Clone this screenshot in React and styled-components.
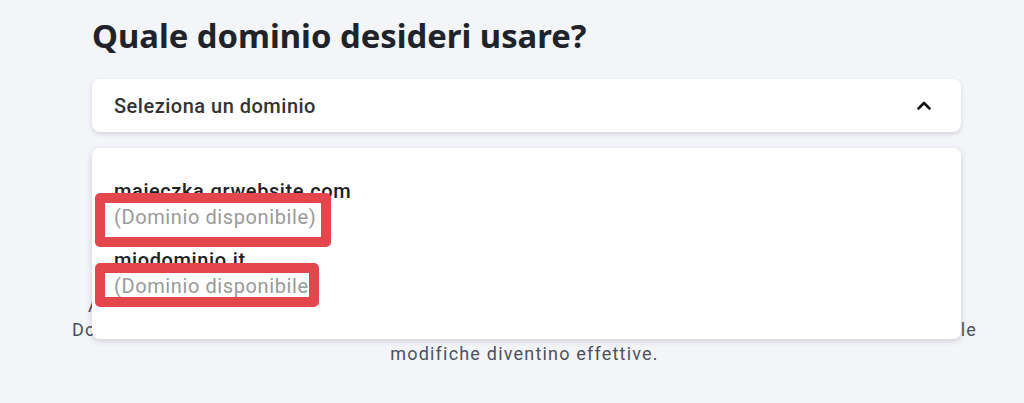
import React from 'react';
import styled, { createGlobalStyle } from 'styled-components';

const GlobalStyle = createGlobalStyle`
  body {
    margin: 0;
    background: #f4f5f9;
    font-family: Roboto, "Liberation Sans", sans-serif;
  }
`

const Page = styled.div`
  width: 869px;
  padding: 13px 0 0 92px;
`

const Title = styled.h1`
  margin: 0;
  font-family: "Noto Sans", "Open Sans", sans-serif;
  font-weight: 700;
  font-size: 32.8px;
  line-height: 45px;
  color: #20232a;
`

const SelectWrap = styled.div`
  position: relative;
  margin-top: 21px;
`

const SelectBox = styled.div`
  height: 53px;
  display: flex;
  align-items: center;
  justify-content: space-between;
  padding: 0 30px 0 22px;
  background: #fff;
  border-radius: 8px;
  box-shadow: 0 2px 4px rgba(30, 35, 50, 0.16);
  font-size: 20px;
  font-weight: 500;
  letter-spacing: 0.5px;
  color: #333;
`

const Menu = styled.div`
  position: absolute;
  top: 69px;
  left: 0;
  right: 0;
  height: 191px;
  box-sizing: border-box;
  padding: 30px 22px 0;
  background: #fff;
  border-radius: 8px;
  box-shadow: 0 2px 6px rgba(30, 35, 50, 0.18);
  display: flex;
  flex-direction: column;
  gap: 17px;
  z-index: 2;
`

const Option = styled.div`
  position: relative;
  display: flex;
  flex-direction: column;
`

const Name = styled.span`
  font-size: 20px;
  font-weight: 500;
  letter-spacing: 0.6px;
  line-height: 26px;
  color: #222;
`

const Status = styled.span`
  font-size: 20px;
  letter-spacing: 0.6px;
  line-height: 26px;
  color: #9a9a9a;
`

const Highlight = styled.div`
  position: absolute;
  left: -19px;
  top: ${p => p.top}px;
  width: ${p => p.w}px;
  height: ${p => p.h}px;
  box-sizing: border-box;
  border: 10px solid #e3464d;
  border-radius: 5px;
`

const Note = styled.div`
  margin: 162px -34px 0 -38px;
  display: flex;
  flex-direction: column;
  align-items: center;
  font-size: 18px;
  letter-spacing: 1.2px;
  line-height: 24px;
  color: #4b5160;
`

const Line = styled.div`
  width: ${p => (p.w ? `${p.w}px` : 'auto')};
  white-space: nowrap;
  text-align: justify;
  text-align-last: ${p => (p.w ? 'justify' : 'center')};
`

const Chevron = () => (
  <svg width="14" height="9" viewBox="0 0 14 9" fill="none">
    <path d="M1.5 7.5 L7 2 L12.5 7.5" stroke="#111" strokeWidth="2.6" strokeLinecap="round" strokeLinejoin="round" />
  </svg>
)

const domains = ['majeczka.grwebsite.com', 'miodominio.it'];

const App = () => {
  return (
    <Page>
      <GlobalStyle />
      <Title>Quale dominio desideri usare?</Title>
      <SelectWrap>
        <SelectBox>
          <span>Seleziona un dominio</span>
          <Chevron />
        </SelectBox>
        <Menu>
          <Option>
            <Name>{domains[0]}</Name>
            <Status>(Dominio disponibile)</Status>
            <Highlight top={15} w={236} h={54} />
          </Option>
          <Option>
            <Name>{domains[1]}</Name>
            <Status>(Dominio disponibile)</Status>
            <Highlight top={16} w={224} h={44} />
          </Option>
        </Menu>
      </SelectWrap>
      <Note>
        <Line w={873}>Assicurati che il dominio scelto sia attivo e i record DNS configurati.</Line>
        <Line w={905}>Domini e record DNS richiedono fino a 48 ore circa affinché tutte le</Line>
        <Line>modifiche diventino effettive.</Line>
      </Note>
    </Page>
  );
}

export default App;
